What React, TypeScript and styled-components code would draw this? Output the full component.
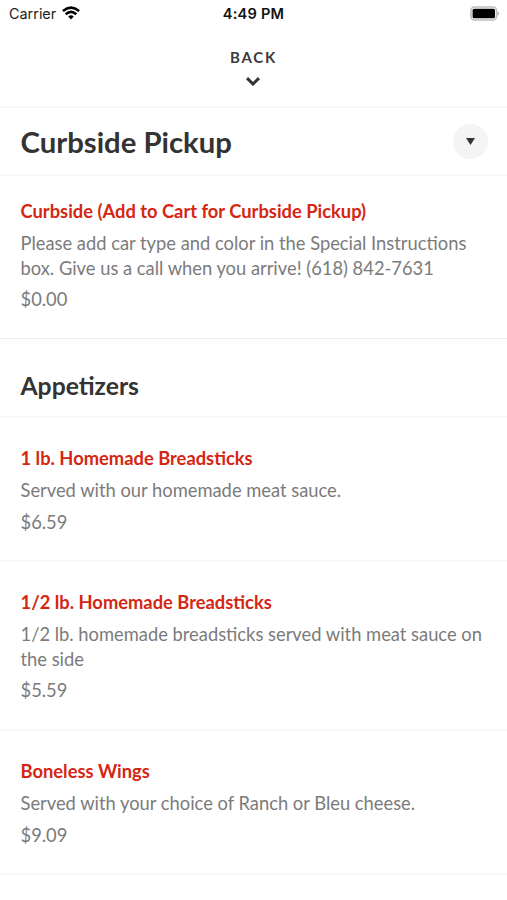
import React from 'react';
import styled, { createGlobalStyle } from 'styled-components';

const Global = createGlobalStyle`
  *{box-sizing:border-box}
  body{margin:0;background:#fff;font-family:Lato,sans-serif;overflow:hidden}
  h1,h2,h3,p{margin:0}
`;
const Screen = styled.main`width:507px;height:900px;background:#fff;overflow:hidden;`;
const StatusBar = styled.div`
  height:27px;display:grid;grid-template-columns:1fr auto 1fr;align-items:center;
  padding:0 7px 0 9px;font-family:Inter,sans-serif;font-size:14.4px;color:#222;
`;
const Carrier = styled.div`display:flex;align-items:center;gap:6px;svg{margin-top:-2px}`;
const Clock = styled.div`font-weight:600;font-size:14.6px;letter-spacing:.2px;color:#111;margin-right:2px;`;
const Battery = styled.div`display:flex;justify-content:flex-end;`;
const BackButton = styled.button`
  width:100%;height:81px;border:0;border-bottom:2px solid #f7f7f7;background:#fff;padding:20px 0 0;
  display:flex;flex-direction:column;align-items:center;gap:10px;
  font:700 15px/20px Lato,sans-serif;letter-spacing:1.7px;color:#3a3a3a;
  svg{margin-right:1px}
`;
const TitleBar = styled.header`
  height:68px;border-bottom:2px solid #f7f7f7;padding:0 19px 0 20.5px;
  display:flex;align-items:center;justify-content:space-between;
`;
const Title = styled.h1`padding-top:2px;font-size:29.3px;line-height:36px;font-weight:700;color:#333;`;
const Toggle = styled.button`
  width:35px;height:35px;border:0;border-radius:50%;background:#f4f4f4;padding:0;
  display:flex;align-items:center;justify-content:center;
`;
const SectionTitle = styled.h2`
  height:79px;padding:31px 20.5px 0;border-bottom:2px solid #f7f7f7;
  font-size:24.7px;line-height:32px;font-weight:700;color:#333;
`;
const Item = styled.article<{ $h: number; $top: number; $thin?: boolean }>`
  height:${p => p.$h}px;padding:${p => p.$top}px 20.5px 0;
  border-bottom:${p => (p.$thin ? '1px solid #ededed' : '2px solid #f7f7f7')};
`;
const Name = styled.h3`font-size:18.33px;line-height:24px;font-weight:700;color:#d52612;white-space:nowrap;`;
const Text = styled.p`margin-top:8px;font-size:18.34px;line-height:24.5px;color:#7b7b7b;white-space:nowrap;`;
const Price = styled(Text)`margin-top:7px;`;

type Dish = { name: string; lines: string[]; price: string; h: number; top: number; thin?: boolean };
const pickup: Dish = { name: 'Curbside (Add to Cart for Curbside Pickup)', lines: ['Please add car type and color in the Special Instructions', 'box. Give us a call when you arrive! (618) 842-7631'], price: '$0.00', h: 163, top: 23, thin: true };
const dishes: Dish[] = [
  { name: '1 lb. Homemade Breadsticks', lines: ['Served with our homemade meat sauce.'], price: '$6.59', h: 144, top: 28 },
  { name: '1/2 lb. Homemade Breadsticks', lines: ['1/2 lb. homemade breadsticks served with meat sauce on', 'the side'], price: '$5.59', h: 169, top: 28 },
  { name: 'Boneless Wings', lines: ['Served with your choice of Ranch or Bleu cheese.'], price: '$9.09', h: 144, top: 28 },
];
const DishRow = ({ dish }: { dish: Dish }) => (
  <Item $h={dish.h} $top={dish.top} $thin={dish.thin}>
    <Name>{dish.name}</Name>
    <Text>{dish.lines.map((l, i) => <React.Fragment key={l}>{i > 0 && <br />}{l}</React.Fragment>)}</Text>
    <Price>{dish.price}</Price>
  </Item>
);

export default function App() {
  return (
    <Screen>
      <Global />
      <StatusBar>
        <Carrier>Carrier
          <svg width="18" height="14" viewBox="0 0 18 14" fill="none" stroke="#000" strokeWidth="2.5">
            <path d="M.9 5Q9-1.8 17.1 5M3.7 8.2Q9 3.6 14.3 8.2" /><path d="M6.2 10.6Q9 8 11.8 10.6L9 13.5Z" fill="#000" stroke="none" />
          </svg>
        </Carrier>
        <Clock>4:49 PM</Clock>
        <Battery>
          <svg width="30" height="15" viewBox="0 0 30 15"><rect x="1" y="1" width="25.5" height="13" rx="3.5" fill="none" stroke="#bdbdbd" strokeWidth="1.6" /><rect x="2.6" y="2.8" width="22.4" height="9.4" rx="1.5" /><path d="M27.5 5q3 2.5 0 5z" fill="#aaa" /></svg>
        </Battery>
      </StatusBar>
      <BackButton>BACK
        <svg width="14" height="9" viewBox="0 0 14 9" fill="none" stroke="#333" strokeWidth="3"><path d="M1 1.2L7 7L13 1.2" /></svg>
      </BackButton>
      <TitleBar>
        <Title>Curbside Pickup</Title>
        <Toggle aria-label="Choose category"><svg width="9" height="7" viewBox="0 0 9 7"><path d="M0 0H9L4.5 7Z" fill="#333" /></svg></Toggle>
      </TitleBar>
      <DishRow dish={pickup} />
      <SectionTitle>Appetizers</SectionTitle>
      {dishes.map(d => <DishRow key={d.name} dish={d} />)}
    </Screen>
  );
}
